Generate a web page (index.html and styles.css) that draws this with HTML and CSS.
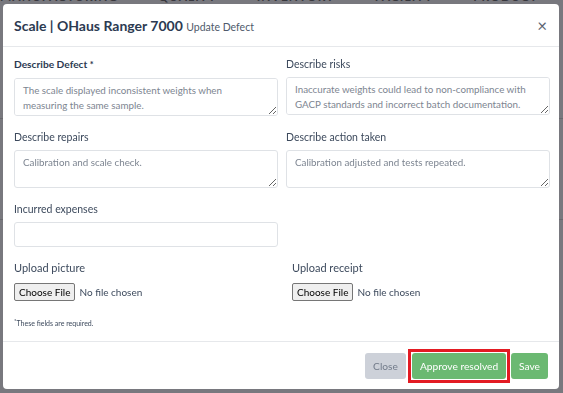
FILE: index.html
```html
<!DOCTYPE html>
<html>

<head>
    <meta charset="utf-8">
    <title>Update Defect</title>
    <link rel="stylesheet" href="styles.css">
</head>

<body>
    <div class="page-nav">
        <span>MANUFACTURING</span>
        <span>QUALITY</span>
        <span>INVENTORY</span>
        <span>FACILITY</span>
        <span>PRODUCT PASS</span>
    </div>
    <div class="page-lines">
        <div></div>
        <div></div>
    </div>

    <div class="modal-backdrop"></div>

    <div class="modal">
        <div class="modal-head">
            <div class="modal-title">Scale | OHaus Ranger 7000 <span>Update Defect</span></div>
            <div class="modal-close">&times;</div>
        </div>

        <div class="modal-body">
            <div class="form-grid">
                <div class="form-group">
                    <label class="required">Describe Defect <b>*</b></label>
                    <textarea placeholder="The scale displayed inconsistent weights when&#10;measuring the same sample."></textarea>
                </div>
                <div class="form-group">
                    <label>Describe risks</label>
                    <textarea placeholder="Inaccurate weights could lead to non-compliance with&#10;GACP standards and incorrect batch documentation."></textarea>
                </div>
                <div class="form-group">
                    <label>Describe repairs</label>
                    <textarea placeholder="Calibration and scale check."></textarea>
                </div>
                <div class="form-group">
                    <label>Describe action taken</label>
                    <textarea placeholder="Calibration adjusted and tests repeated."></textarea>
                </div>
                <div class="form-group">
                    <label>Incurred expenses</label>
                    <input type="text" class="text-input">
                </div>
                <div class="form-group"></div>
            </div>

            <div class="upload-grid">
                <div class="form-group">
                    <label>Upload picture</label>
                    <div class="file-input"><span class="file-btn">Choose File</span> No file chosen</div>
                </div>
                <div class="form-group">
                    <label>Upload receipt</label>
                    <div class="file-input"><span class="file-btn">Choose File</span> No file chosen</div>
                </div>
            </div>

            <div class="form-note"><sup>*</sup>These fields are required.</div>
        </div>

        <div class="modal-foot">
            <button class="btn btn-light">Close</button>
            <span class="highlight"><button class="btn btn-green">Approve resolved</button></span>
            <button class="btn btn-green">Save</button>
        </div>
    </div>
</body>

</html>
```

FILE: styles.css
```css
html,
body {
    margin: 0;
    padding: 0;
    height: 100%;
    font-family: Lato, "Open Sans", sans-serif;
    background: #fff;
    overflow: hidden;
}

.page-nav {
    display: flex;
    gap: 40px;
    margin-top: -10px;
    font-size: 12px;
    font-weight: bold;
    letter-spacing: 1px;
    color: #777;
    line-height: 14px;
}

.page-lines div {
    height: 1px;
    background: #ddd;
    margin-top: 100px;
}

.modal-backdrop {
    position: absolute;
    inset: 0;
    background: rgba(0, 0, 12, 0.53);
}

.modal {
    position: absolute;
    left: 3px;
    top: 4px;
    width: 556px;
    height: 385px;
    background: #fff;
    border-radius: 4px;
    display: flex;
    flex-direction: column;
}

.modal-head {
    height: 42px;
    display: flex;
    align-items: center;
    padding: 0 11px;
    border-bottom: 1px solid #e6e8eb;
}

.modal-title {
    flex: auto;
    font-size: 14px;
    font-weight: bold;
    color: #2c3a51;
}

.modal-title span {
    font-size: 10.5px;
    font-weight: normal;
    color: #4f5a6b;
}

.modal-close {
    font-size: 17px;
    color: #5d6470;
    margin-right: 1px;
}

.modal-body {
    flex: auto;
    padding: 10px 11px 0;
}

.form-grid {
    display: grid;
    grid-template-columns: 264px 264px;
    column-gap: 8px;
    row-gap: 14px;
}

.form-group label {
    display: block;
    font-size: 10.5px;
    color: #3d4a5d;
    margin-bottom: 6px;
    line-height: 14px;
}

.form-group label.required {
    font-weight: bold;
    font-size: 10.2px;
    color: #2c3a51;
}

.form-group label b {
    font-size: 9px;
}

textarea,
.text-input {
    display: block;
    box-sizing: border-box;
    width: 100%;
    height: 38px;
    border: 1px solid #dfe2e6;
    border-radius: 3px;
    padding: 4px 8px;
    font-family: inherit;
    font-size: 9.8px;
    line-height: 15px;
    resize: vertical;
    margin: 0;
}

.text-input {
    height: 25px;
}

textarea::placeholder {
    color: #7d8591;
}

.upload-grid {
    display: grid;
    grid-template-columns: 278px 264px;
    margin-top: 14px;
}

.upload-grid .form-group label {
    font-size: 11px;
    margin-bottom: 8px;
}

.file-input {
    display: flex;
    align-items: center;
    gap: 4px;
    font-size: 10px;
    color: #3d4a5d;
}

.file-btn {
    display: inline-block;
    background: #efefef;
    border: 1px solid #767676;
    border-radius: 2px;
    padding: 2px 4px;
    color: #000;
    font-size: 10px;
}

.form-note {
    font-size: 7px;
    color: #3d4a5d;
    margin-top: 16px;
}

.modal-foot {
    height: 47px;
    border-top: 1px solid #e6e8eb;
    display: flex;
    align-items: center;
    justify-content: flex-end;
    padding: 0 11px;
}

.btn {
    font-family: inherit;
    font-size: 10.2px;
    border: none;
    border-radius: 3px;
    height: 26px;
    padding: 0 8px;
    color: #fff;
}

.btn-light {
    background: #cdd1d9;
    color: #727b8a;
    margin-right: 6px;
}

.btn-green {
    background: #6bb972;
}

.highlight {
    display: inline-block;
    outline: 3px solid #e31b23;
    outline-offset: 1px;
    margin-right: 5px;
}

.highlight .btn {
    display: block;
}
```
